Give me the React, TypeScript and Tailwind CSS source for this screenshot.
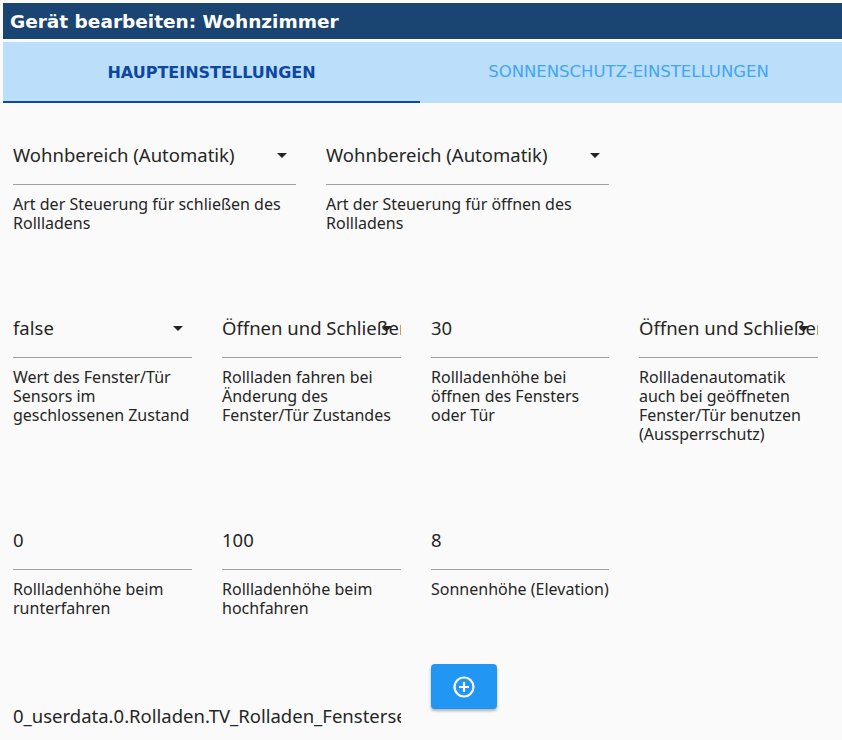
import React from "react";

const body = { fontFamily: '"Noto Sans", "Open Sans", sans-serif' };
const head = { fontFamily: '"DejaVu Sans", Verdana, sans-serif' };

function Arrow() {
  return (
    <svg viewBox="0 0 24 24" className="absolute right-[2px] top-0 h-6 w-6 fill-[#222]">
      <path d="M7 10l5 5 5-5z" />
    </svg>
  );
}

function Field({
  value,
  helper,
  select,
  className,
}: {
  value: string;
  helper: string;
  select?: boolean;
  className: string;
}) {
  return (
    <div className={className}>
      <div className="relative border-b border-[#a0a0a0] pb-[17px]">
        <div className="overflow-hidden whitespace-nowrap text-[18.5px] leading-6 text-[#262626]">{value}</div>
        {select && <Arrow />}
      </div>
      <div className="mt-[10px] text-[16px] leading-[19px] text-[#262626]">{helper}</div>
    </div>
  );
}

export default function App() {
  return (
    <div className="min-h-[740px] bg-[#fafafa] pl-[3px] pt-[3px]" style={body}>
      <div className="flex h-9 items-center bg-[#1a4472] pl-[7px] pt-px text-[18.5px] font-bold text-white" style={head}>
        Gerät bearbeiten: Wohnzimmer
      </div>
      <div className="mt-[3px] flex h-[61px] bg-[#bbdefb]" style={head}>
        <div className="flex w-[417px] items-center justify-center border-b-2 border-[#0d47a1] pt-[2px] text-[16px] font-bold text-[#0d47a1]">
          HAUPTEINSTELLUNGEN
        </div>
        <div className="flex flex-1 items-center justify-center pr-[5px] text-[16.5px] text-[#42a5f5]">
          SONNENSCHUTZ-EINSTELLUNGEN
        </div>
      </div>

      <div className="pl-[10px]">
        <div className="mt-[40px] flex gap-[30px]">
          <Field className="w-[283px]" select value="Wohnbereich (Automatik)" helper="Art der Steuerung für schließen des Rollladens" />
          <Field className="w-[283px]" select value="Wohnbereich (Automatik)" helper="Art der Steuerung für öffnen des Rollladens" />
        </div>

        <div className="mt-[83px] flex gap-[30px]">
          <Field className="w-[179px]" select value="false" helper="Wert des Fenster/Tür Sensors im geschlossenen Zustand" />
          <Field className="w-[179px]" select value="Öffnen und Schließen" helper="Rollladen fahren bei Änderung des Fenster/Tür Zustandes" />
          <Field className="w-[178px]" value="30" helper="Rollladenhöhe bei öffnen des Fensters oder Tür" />
          <Field className="w-[179px]" select value="Öffnen und Schließen" helper="Rollladenautomatik auch bei geöffneten Fenster/Tür benutzen (Aussperrschutz)" />
        </div>

        <div className="mt-[84px] flex gap-[30px]">
          <Field className="w-[179px]" value="0" helper="Rollladenhöhe beim runterfahren" />
          <Field className="w-[179px]" value="100" helper="Rollladenhöhe beim hochfahren" />
          <Field className="w-[178px]" value="8" helper="Sonnenhöhe (Elevation)" />
        </div>

        <div className="mt-[46px] flex gap-[30px]">
          <div className="flex w-[388px] items-end">
            <div className="overflow-hidden whitespace-nowrap pt-[40px] text-[18.5px] leading-6 text-[#262626]">
              0_userdata.0.Rolladen.TV_Rolladen_Fenstersensor
            </div>
          </div>
          <button className="flex h-[45px] w-[66px] items-center justify-center rounded bg-[#2196f3] shadow-[0_2px_3px_rgba(0,0,0,0.3)]">
            <svg viewBox="0 0 24 24" className="h-6 w-6" fill="none" stroke="white" strokeWidth="2.2">
              <circle cx="12" cy="12" r="9.5" />
              <path d="M12 7v10M7 12h10" />
            </svg>
          </button>
        </div>
      </div>
    </div>
  );
}
